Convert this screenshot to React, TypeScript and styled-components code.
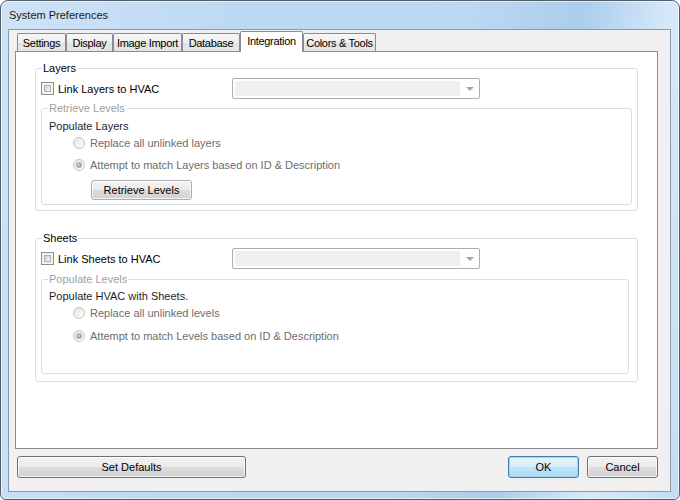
import React from "react";
import styled, { createGlobalStyle } from "styled-components";

const FONT = `"Liberation Sans", Arial, "Segoe UI", sans-serif`;

const Global = createGlobalStyle`
  html, body { margin: 0; padding: 0; background: #ffffff; }
  body { font-family: ${FONT}; font-size: 11px; }
  * { box-sizing: border-box; }
`;

const Window = styled.div`
  width: 680px;
  height: 500px;
  border: 1px solid #53606c;
  border-radius: 8px 8px 6px 6px;
  background: linear-gradient(100deg, #cfe3f7 0%, #bed9f3 30%, #bcd7f2 62%, #abcdec 76%, #d6e9fa 88%, #c4ddf4 100%);
  box-shadow: inset 0 0 0 1px rgba(255, 255, 255, 0.55);
  display: flex;
  flex-direction: column;
  overflow: hidden;
`;

const TitleBar = styled.div`
  height: 28px;
  padding-left: 8px;
  display: flex;
  align-items: center;
  font-size: 11px;
  color: #1a1a1a;
`;

const Client = styled.div`
  flex: 1;
  margin: 0 8px 7px 7px;
  border: 1px solid #8b99a8;
  background: #f0f0f0;
  padding-top: 1px;
  display: flex;
  flex-direction: column;
`;

const TabStrip = styled.div`
  display: flex;
  align-items: flex-end;
  height: 21px;
  margin: 0 12px -1px 6px;
  padding-left: 2px;
  position: relative;
  z-index: 1;
`;

const Tab = styled.div<{ $active?: boolean; $w: number }>`
  width: ${(p) => p.$w}px;
  height: ${(p) => (p.$active ? 21 : 18)}px;
  margin-bottom: ${(p) => (p.$active ? 0 : 1)}px;
  padding-bottom: ${(p) => (p.$active ? 2 : 0)}px;
  border: 1px solid #898c95;
  border-bottom: none;
  border-radius: 2px 2px 0 0;
  background: ${(p) =>
    p.$active
      ? "#ffffff"
      : "linear-gradient(#f7f7f7 0%, #eeeeee 50%, #e2e2e2 51%, #e6e6e6 100%)"};
  display: flex;
  align-items: center;
  justify-content: center;
  color: #000;
  letter-spacing: -0.3px;
  white-space: nowrap;
  position: relative;
  z-index: ${(p) => (p.$active ? 2 : 0)};
`;

const TabPage = styled.div`
  height: 398px;
  margin: 0 12px 0 6px;
  border: 1px solid #898c95;
  background: #ffffff;
  padding: 9px 19px 0;
`;

const Group = styled.fieldset<{ $mt?: number; $mr?: number; $pt?: number; $pb: number; $pl?: number }>`
  margin: ${(p) => p.$mt ?? 0}px ${(p) => p.$mr ?? 0}px 0 0;
  padding: ${(p) => p.$pt ?? 3}px 5px ${(p) => p.$pb}px ${(p) => p.$pl ?? 5}px;
  border: 1px solid #d5dfe5;
  border-radius: 3px;
  min-width: 0;
`;

const Legend = styled.legend<{ $disabled?: boolean }>`
  padding: 0 1px;
  margin-left: ${(p) => (p.$disabled ? -1 : 1)}px;
  height: 14px;
  line-height: 14px;
  color: ${(p) => (p.$disabled ? "#a0a0a0" : "#000")};
`;

const LinkRow = styled.div`
  display: grid;
  grid-template-columns: 191px 248px;
  align-items: center;
  height: 21px;
`;

const CheckLabel = styled.label`
  display: flex;
  align-items: center;
  gap: 4px;
  color: #000;
`;

const CheckBox = styled.span`
  width: 13px;
  height: 13px;
  border: 1px solid #8e8f8f;
  background: #f4f4f4;
  padding: 2px;
  display: flex;
`;

const CheckInner = styled.span`
  flex: 1;
  border: 1px solid #aeb0b2;
  background: linear-gradient(135deg, #cbcfd5 0%, #e2e4e7 55%, #f4f4f4 100%);
`;

const Combo = styled.div`
  height: 21px;
  border: 1px solid #adadad;
  border-radius: 2px;
  background: #ffffff;
  padding: 2px;
  display: flex;
`;

const ComboField = styled.div`
  width: 225px;
  background: #f0f0f0;
`;

const ComboArrow = styled.div`
  flex: 1;
  display: flex;
  align-items: center;
  justify-content: center;
  padding-left: 2px;
  &::before {
    content: "";
    border-left: 4px solid transparent;
    border-right: 4px solid transparent;
    border-top: 4px solid #a6a6a6;
  }
`;

const Caption = styled.div`
  height: 16px;
  line-height: 16px;
  color: #1e1e1e;
`;

const RadioRow = styled.div<{ $mt: number }>`
  height: 18px;
  margin: ${(p) => p.$mt}px 0 0 24px;
  display: flex;
  align-items: center;
  gap: 5px;
  color: #6d6d6d;
`;

const Radio = styled.span<{ $checked?: boolean }>`
  width: 12px;
  height: 12px;
  border-radius: 50%;
  border: 1px solid #c3c3c3;
  background: linear-gradient(135deg, #e6e6e6 0%, #f4f4f4 60%, #ffffff 100%);
  display: flex;
  align-items: center;
  justify-content: center;
  &::after {
    content: "";
    width: 6px;
    height: 6px;
    border-radius: 50%;
    background: ${(p) => (p.$checked ? "radial-gradient(circle at 40% 40%, #c8c8c8, #8f8f8f)" : "transparent")};
  }
`;

const Button = styled.button<{ $w: number; $h: number; $default?: boolean; $soft?: boolean }>`
  width: ${(p) => p.$w}px;
  height: ${(p) => p.$h}px;
  padding: 0;
  font-family: ${FONT};
  font-size: 11px;
  color: #000;
  border: 1px solid ${(p) => (p.$default ? "#3c7fb1" : p.$soft ? "#adadad" : "#707070")};
  border-radius: 3px;
  background: ${(p) =>
    p.$default
      ? "linear-gradient(#e5f4fc 0%, #d7eefb 48%, #bfe5fb 50%, #acdaf4 100%)"
      : "linear-gradient(#f2f2f2 0%, #ebebeb 48%, #dddddd 50%, #d1d1d1 100%)"};
  box-shadow: inset 0 0 0 1px ${(p) => (p.$default ? "#9ed6f5" : "rgba(255,255,255,0.75)")};
`;

const ButtonRow = styled.div<{ $ml: number; $mt: number }>`
  margin: ${(p) => p.$mt}px 0 0 ${(p) => p.$ml}px;
`;

const Footer = styled.div`
  margin-top: 7px;
  padding: 0 12px 0 8px;
  display: flex;
  align-items: center;
  gap: 8px;
`;

const Spacer = styled.div`
  flex: 1;
`;

const TABS: { label: string; w: number }[] = [
  { label: "Settings", w: 49 },
  { label: "Display", w: 47 },
  { label: "Image Import", w: 69 },
  { label: "Database", w: 58 },
  { label: "Integration", w: 63 },
  { label: "Colors & Tools", w: 73 },
];

export default function App() {
  return (
    <>
      <Global />
      <Window>
        <TitleBar>System Preferences</TitleBar>
        <Client>
          <TabStrip>
            {TABS.map((t) => (
              <Tab key={t.label} $w={t.w} $active={t.label === "Integration"}>
                {t.label}
              </Tab>
            ))}
          </TabStrip>
          <TabPage>
            <Group $pb={5}>
              <Legend>Layers</Legend>
              <LinkRow>
                <CheckLabel>
                  <CheckBox>
                    <CheckInner />
                  </CheckBox>
                  Link Layers to HVAC
                </CheckLabel>
                <Combo>
                  <ComboField />
                  <ComboArrow />
                </Combo>
              </LinkRow>
              <Group $mt={2} $pb={4} $pl={7} $pt={3}>
                <Legend $disabled>Retrieve Levels</Legend>
                <Caption>Populate Layers</Caption>
                <RadioRow $mt={0}>
                  <Radio />
                  Replace all unlinked layers
                </RadioRow>
                <RadioRow $mt={4}>
                  <Radio $checked />
                  Attempt to match Layers based on ID &amp; Description
                </RadioRow>
                <ButtonRow $ml={42} $mt={6}>
                  <Button $w={101} $h={20} $soft>
                    Retrieve Levels
                  </Button>
                </ButtonRow>
              </Group>
            </Group>

            <Group $mt={20} $pb={7}>
              <Legend>Sheets</Legend>
              <LinkRow>
                <CheckLabel>
                  <CheckBox>
                    <CheckInner />
                  </CheckBox>
                  Link Sheets to HVAC
                </CheckLabel>
                <Combo>
                  <ComboField />
                  <ComboArrow />
                </Combo>
              </LinkRow>
              <Group $mt={3} $mr={3} $pb={28} $pl={7} $pt={2}>
                <Legend $disabled>Populate Levels</Legend>
                <Caption>Populate HVAC with Sheets.</Caption>
                <RadioRow $mt={0}>
                  <Radio />
                  Replace all unlinked levels
                </RadioRow>
                <RadioRow $mt={5}>
                  <Radio $checked />
                  Attempt to match Levels based on ID &amp; Description
                </RadioRow>
              </Group>
            </Group>
          </TabPage>
          <Footer>
            <Button $w={229} $h={22}>
              Set Defaults
            </Button>
            <Spacer />
            <Button $w={71} $h={22} $default>
              OK
            </Button>
            <Button $w={71} $h={22}>
              Cancel
            </Button>
          </Footer>
        </Client>
      </Window>
    </>
  );
}
